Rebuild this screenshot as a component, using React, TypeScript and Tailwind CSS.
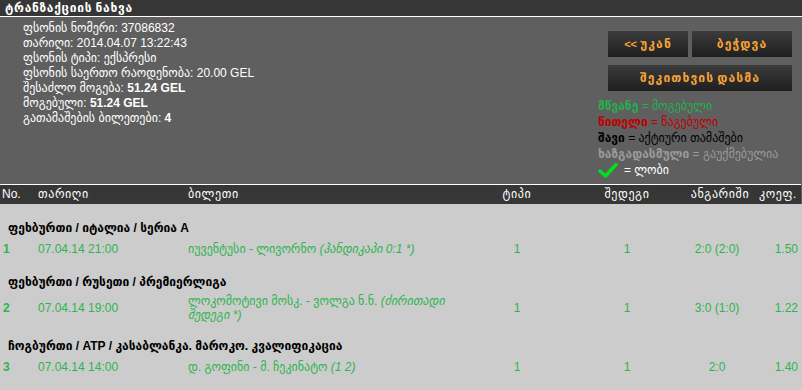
import React from "react";

const G = "text-[#2db54e]";
const GEO_RE = /([\u10A0-\u10FF]+)/;

function K({ t, c }: { t: string; c: string }) {
  const parts = t.split(GEO_RE);
  return (
    <>
      {parts.map((s, i) =>
        i % 2 === 1 ? (
          <span key={i} className={c}>
            {s}
          </span>
        ) : (
          <React.Fragment key={i}>{s}</React.Fragment>
        )
      )}
    </>
  );
}

type Row = {
  cat: string;
  no: string;
  date: string;
  teams: string;
  extra: string;
  type: string;
  res: string;
  score: string;
  coef: string;
  h: string;
};

const rows: Row[] = [
  {
    cat: "ფეხბურთი / იტალია / სერია A",
    no: "1",
    date: "07.04.14 21:00",
    teams: "იუვენტუსი - ლივორნო",
    extra: "(ჰანდიკაპი 0:1 *)",
    type: "1",
    res: "1",
    score: "2:0 (2:0)",
    coef: "1.50",
    h: "h-[18px]",
  },
  {
    cat: "ფეხბურთი / რუსეთი / პრემიერლიგა",
    no: "2",
    date: "07.04.14 19:00",
    teams: "ლოკომოტივი მოსკ. - ვოლგა ნ.ნ.",
    extra: "(ძირითადი შედეგი *)",
    type: "1",
    res: "1",
    score: "3:0 (1:0)",
    coef: "1.22",
    h: "h-[28px]",
  },
  {
    cat: "ჩოგბურთი / ATP / კასაბლანკა. მაროკო. კვალიფიკაცია",
    no: "3",
    date: "07.04.14 14:00",
    teams: "დ. გოფინი - მ. ჩეკინატო",
    extra: "(1 2)",
    type: "1",
    res: "1",
    score: "2:0",
    coef: "1.40",
    h: "h-[18px]",
  },
];

const btn =
  "h-[26px] bg-gradient-to-b from-[#3c3c3c] to-[#1f1f1f] text-[#f5a236] font-bold text-[11px] leading-[26px] whitespace-nowrap";
const BTN_G = "text-[1.1em] tracking-[0.09em]";
const HDR_G = "tracking-[0.6px]";

export default function App() {
  return (
    <div className="w-[802px] h-[390px] overflow-hidden flex flex-col bg-[#5f5f5f] [font-family:'Liberation_Sans','DejaVu_Sans',sans-serif] text-[12px]">
      {/* title bar */}
      <div className="w-[801px] h-[16px] bg-[#363636] border-b border-white box-content flex items-center pl-[5px]">
        <span className="text-white font-bold text-[12px] leading-[16px] h-[16px]">
          <K t="ტრანზაქციის ნახვა" c="tracking-[0.7px]" />
        </span>
      </div>

      {/* info panel */}
      <div className="h-[167px] flex">
        <div className="pl-[23px] pt-[4px] text-white leading-[15px] text-[12px] whitespace-nowrap">
          <div>ფსონის ნომერი: 37086832</div>
          <div>თარიღი: 2014.04.07 13:22:43</div>
          <div>ფსონის ტიპი: ექსპრესი</div>
          <div>ფსონის საერთო რაოდენობა: 20.00 GEL</div>
          <div>
            შესაძლო მოგება: <b>51.24 GEL</b>
          </div>
          <div>
            მოგებული: <b>51.24 GEL</b>
          </div>
          <div>
            გათამაშების ბილეთები: <b>4</b>
          </div>
        </div>
        <div className="ml-auto mr-[10px] w-[194px] pt-[14px]">
          <div className="pl-[10px] flex gap-[4px]">
            <button className={`w-[80px] ${btn}`}>
              <K t="<< უკან" c={BTN_G} />
            </button>
            <button className={`w-[100px] ${btn}`}>
              <K t="ბეჭდვა" c={BTN_G} />
            </button>
          </div>
          <div className="pl-[10px] mt-[8px]">
            <button className={`w-[184px] ${btn}`}>
              <K t="შეკითხვის დასმა" c={BTN_G} />
            </button>
          </div>
          <div className="mt-[7px] leading-[16px] text-[12px] whitespace-nowrap">
            <div className="text-[#22b14c]">
              <b>მწვანე</b> = მოგებული
            </div>
            <div className="text-[#c00000]">
              <b>წითელი</b> = წაგებული
            </div>
            <div className="text-black">
              <b>შავი</b> = აქტიური თამაშები
            </div>
            <div className="text-[#9a9a9a]">
              <b>ხაზგადასმული</b> = გაუქმებულია
            </div>
            <div className="text-white flex items-center gap-[6px]">
              <svg width="20" height="15" viewBox="0 0 20 15">
                <path
                  d="M2 8 L7.5 13 L18 1.5"
                  fill="none"
                  stroke="#00e020"
                  strokeWidth="3.5"
                  strokeLinecap="round"
                  strokeLinejoin="round"
                />
              </svg>
              <span>= ლობი</span>
            </div>
          </div>
        </div>
      </div>

      {/* table header */}
      <div className="w-[801px] h-[19px] bg-[#363636] border-t border-white box-content flex items-center text-white text-[12px] leading-[19px] whitespace-nowrap">
        <div className="w-[35px] pl-[2px]">No.</div>
        <div className="w-[150px] pl-[3px]">
          <K t="თარიღი" c={HDR_G} />
        </div>
        <div className="w-[277px] pl-[3px]">
          <K t="ბილეთი" c={HDR_G} />
        </div>
        <div className="w-[110px] text-center">
          <K t="ტიპი" c={HDR_G} />
        </div>
        <div className="w-[110px] text-center">
          <K t="შედეგი" c={HDR_G} />
        </div>
        <div className="w-[76px] text-center">
          <K t="ანგარიში" c={HDR_G} />
        </div>
        <div className="flex-1 pl-[1px]">
          <K t="კოეფ." c={HDR_G} />
        </div>
      </div>

      {/* body */}
      <div className="flex-1 bg-[#cccccc]">
        {rows.map((r) => (
          <div key={r.no}>
            <div className="h-[36px] pt-[17px] pl-[8px] leading-[14px] font-bold text-black text-[12px] whitespace-nowrap">
              {r.cat}
            </div>
            <div className={`flex items-center ${r.h} ${G} text-[12px] leading-[14px]`}>
              <div className="w-[35px] pl-[3px] font-bold">{r.no}</div>
              <div className="w-[150px] pl-[3px]">{r.date}</div>
              <div className="w-[277px] pl-[3px] pr-[10px]">
                {r.teams} <i>{r.extra}</i>
              </div>
              <div className="w-[110px] text-center">{r.type}</div>
              <div className="w-[110px] text-center">{r.res}</div>
              <div className="w-[70px] text-center">{r.score}</div>
              <div className="flex-1 text-right pr-[4px]">{r.coef}</div>
            </div>
          </div>
        ))}
      </div>
    </div>
  );
}
